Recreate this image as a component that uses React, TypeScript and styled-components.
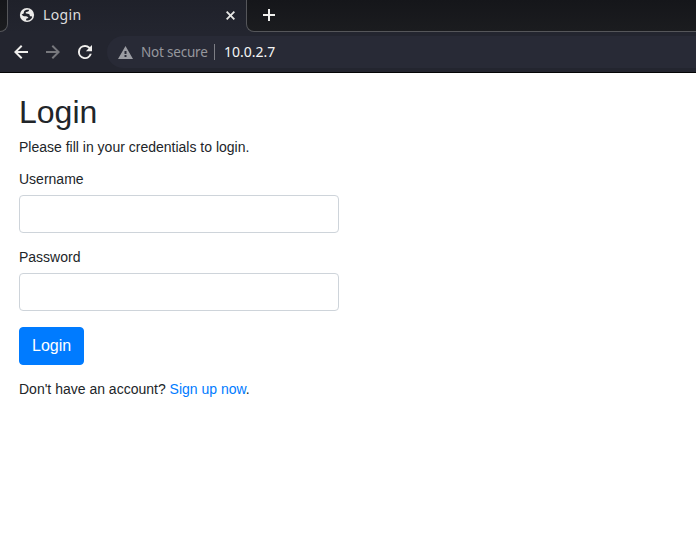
import React from "react";
import styled, { createGlobalStyle } from "styled-components";

const GlobalStyle = createGlobalStyle`
  *, *::before, *::after { box-sizing: border-box; }
  body {
    margin: 0;
    background: #fff;
    color: #212529;
    font: 14px/16px "Liberation Sans", Arial, sans-serif;
    overflow: hidden;
  }
`;

const Window = styled.div`
  height: 543px;
  display: flex;
  flex-direction: column;
`;

const TabStrip = styled.div`
  height: 32px;
  flex: none;
  display: flex;
  background: linear-gradient(#15161a, #1b1c1f);
`;

const StripEdge = styled.div<{ $grow?: boolean; $side: "left" | "right" }>`
  width: 8px;
  flex: ${(p) => (p.$grow ? "1" : "none")};
  border: solid #55565a;
  border-width: ${(p) => (p.$side === "left" ? "0 1px 1px 0" : "0 0 1px 1px")};
  border-radius: ${(p) => (p.$side === "left" ? "0 0 8px 0" : "0 0 0 8px")};
  background: linear-gradient(#15161a, #1b1c1f);
`;

const StripBase = styled.div<{ $grow?: boolean }>`
  display: flex;
  flex: ${(p) => (p.$grow ? "1" : "none")};
  background: #23252f;
`;

const Tab = styled.div`
  width: 238px;
  display: flex;
  align-items: center;
  padding: 0 11px 2px 11px;
  background: linear-gradient(#1f212a, #23252f);
`;

const TabTitle = styled.span`
  flex: 1;
  margin-left: 8px;
  color: #dedede;
  font: 14px/20px "Noto Sans", sans-serif;
  letter-spacing: 0.35px;
`;

const NewTab = styled.div`
  display: flex;
  padding: 9px 0 0 16px;
`;

const Toolbar = styled.div`
  height: 41px;
  flex: none;
  display: flex;
  align-items: center;
  padding-left: 14px;
  background: #23252f;
  border-bottom: 1px solid #050506;
`;

const NavButton = styled.span<{ $dim?: boolean }>`
  width: 32px;
  height: 14px;
  flex: none;
  color: ${(p) => (p.$dim ? "#77787d" : "#f0efed")};
`;

const AddressBar = styled.div`
  flex: 1;
  height: 32px;
  margin-left: -3px;
  display: flex;
  align-items: center;
  padding-left: 11px;
  border-radius: 16px 0 0 16px;
  background: #282a36;
  color: #f5f5f5;
  font: 14px/20px "Noto Sans", sans-serif;
`;

const Security = styled.span`
  width: 66px;
  margin-left: 8px;
  color: #96979d;
  font-size: 13.5px;
  letter-spacing: -0.2px;
  white-space: nowrap;
`;

const Divider = styled.span`
  width: 1px;
  height: 16px;
  margin: 0 9px 0 7px;
  background: #7d7e85;
`;

const Glyph = styled.svg`
  display: block;
  flex: none;
  fill: currentColor;
`;

const Page = styled.main`
  width: 358px;
  padding: 20px 19px;
`;

const Title = styled.h2`
  margin: 0 0 8px;
  font-size: 32px;
  line-height: 38px;
  font-weight: 500;
`;

const Paragraph = styled.p`
  margin: 0 0 16px;
`;

const Field = styled.div`
  margin-bottom: 16px;
`;

const Label = styled.label`
  display: block;
  margin-bottom: 8px;
`;

const Input = styled.input`
  display: block;
  width: 100%;
  height: 38px;
  padding: 6px 12px;
  font: inherit;
  border: 1px solid #ced4da;
  border-radius: 4px;
  background: #fff;
`;

const Submit = styled.button`
  display: block;
  height: 38px;
  margin: 0 0 16px;
  padding: 6px 12px;
  border: 1px solid #007bff;
  border-radius: 4px;
  background: #007bff;
  color: #fff;
  font: 16px/24px "Liberation Sans", Arial, sans-serif;
`;

const Link = styled.a`
  color: #007bff;
  text-decoration: none;
`;

type IconProps = { d: string; box?: string; w?: number; h?: number; color?: string };

const Icon = ({ d, box = "4 4 16 16", w = 14, h = 14, color }: IconProps) => (
  <Glyph viewBox={box} width={w} height={h} color={color} aria-hidden="true">
    <path d={d} />
  </Glyph>
);

const GlobeIcon = () => (
  <Glyph viewBox="0 0 16 16" width={16} height={16} color="#ecebea" aria-hidden="true">
    <circle cx="8" cy="8" r="7.1" />
    <path
      d="M10.2 2.8C10 4.4 8.8 4.9 7.4 4.9c-.9.1-1 1.5-.1 1.6 2 .2 3.5.6 3.5 1.9 0 .8.4.9 1 .9.9 0 1.3.3 1.4.8C12.3 12.1 10.700 13.5 8.2 13.6c-.9 0-1.3-.4-1.1-1.1.2-.8.7-1.1 1.7-1.2.5-.1.6-.7.2-1.1-.7-.7-1.5-.9-2.6-.9-1.5 0-2.9-.7-3.8-1.9.7-.4 1.5-.4 2-.9.4-.4.1-1.6.7-2.4C6.3 3 8.2 2.500 10.2 2.8z"
      fill="#22242d"
    />
  </Glyph>
);

const BACK = "M20 10.9H8.3l5.3-5.3L12 4l-8 8 8 8 1.6-1.6L8.3 13.1H20z";
const FORWARD = "M12 4l-1.6 1.6 5.3 5.3H4v2.2h11.7l-5.3 5.3L12 20l8-8z";
const RELOAD =
  "M17.65 6.35A7.96 7.96 0 0 0 12 4a8 8 0 1 0 7.73 10h-2.3A5.8 5.8 0 1 1 12 6.2c1.6 0 3 .65 4.05 1.7L13 11h7V4z";
const WARNING = "M0 13h15L7.5 0zM8.5 11h-2V9h2zm0-3h-2V5h2z";
const CROSS = "M1.3 0L4.5 3.2 7.7 0 9 1.3 5.8 4.5 9 7.7 7.7 9 4.5 5.8 1.3 9 0 7.7 3.2 4.5 0 1.3z";
const PLUS = "M5 0h2v5h5v2H7v5H5V7H0V5h5z";

const TextField = ({ label, name, type }: { label: string; name: string; type: string }) => (
  <Field>
    <Label htmlFor={name}>{label}</Label>
    <Input id={name} name={name} type={type} />
  </Field>
);

export default function App() {
  return (
    <Window>
      <GlobalStyle />
      <TabStrip>
        <StripBase>
          <StripEdge $side="left" />
        </StripBase>
        <Tab>
          <GlobeIcon />
          <TabTitle>Login</TabTitle>
          <Icon d={CROSS} box="0 0 9 9" w={9} h={9} color="#e6e6e4" />
        </Tab>
        <StripBase $grow>
          <StripEdge $side="right" $grow>
            <NewTab>
              <Icon d={PLUS} box="0 0 12 12" w={12} h={12} color="#f0f0ee" />
            </NewTab>
          </StripEdge>
        </StripBase>
      </TabStrip>
      <Toolbar>
        <NavButton>
          <Icon d={BACK} />
        </NavButton>
        <NavButton $dim>
          <Icon d={FORWARD} />
        </NavButton>
        <NavButton>
          <Icon d={RELOAD} />
        </NavButton>
        <AddressBar>
          <Icon d={WARNING} box="0 0 15 13" w={15} h={13} color="#9b9ca2" />
          <Security>Not secure</Security>
          <Divider />
          <span>10.0.2.7</span>
        </AddressBar>
      </Toolbar>
      <Page>
        <Title>Login</Title>
        <Paragraph>Please fill in your credentials to login.</Paragraph>
        <TextField label="Username" name="username" type="text" />
        <TextField label="Password" name="password" type="password" />
        <Submit type="button">Login</Submit>
        <Paragraph>
          Don't have an account? <Link>Sign up now</Link>.
        </Paragraph>
      </Page>
    </Window>
  );
}
